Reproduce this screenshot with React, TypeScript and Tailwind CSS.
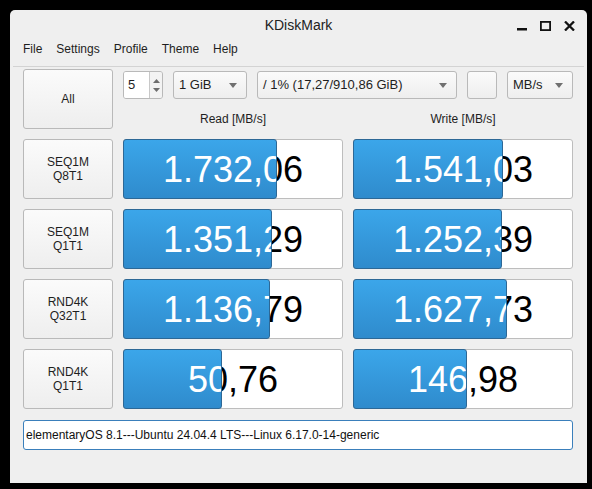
import React from 'react';

const ROWS = [
  { name: ['SEQ1M', 'Q8T1'], read: { text: '1.732,06', fill: 154 }, write: { text: '1.541,03', fill: 150 } },
  { name: ['SEQ1M', 'Q1T1'], read: { text: '1.351,29', fill: 149 }, write: { text: '1.252,39', fill: 149 } },
  { name: ['RND4K', 'Q32T1'], read: { text: '1.136,79', fill: 147 }, write: { text: '1.627,73', fill: 154 } },
  { name: ['RND4K', 'Q1T1'], read: { text: '50,76', fill: 99 }, write: { text: '146,98', fill: 114 } },
];

const MENU = ['File', 'Settings', 'Profile', 'Theme', 'Help'];

function Arrow() {
  return (
    <svg width="8" height="5" viewBox="0 0 8 5" className="shrink-0">
      <path d="M0 0 H8 L4 5 Z" fill="#707070" />
    </svg>
  );
}

function Combo({ label, width }: { label: string; width: string }) {
  return (
    <div
      className={`${width} h-[28px] flex items-center justify-between pl-[5px] pr-[9px] rounded-[3px] border border-[#b9b9b9] bg-gradient-to-b from-[#fbfbfb] to-[#eeeeee] text-[13px] text-[#1e1e1e]`}
    >
      <span className="whitespace-nowrap">{label}</span>
      <Arrow />
    </div>
  );
}

function Bar({ text, fill }: { text: string; fill: number }) {
  return (
    <div className="relative w-[220px] h-[60px]">
      <div className="absolute inset-0 rounded-[3px] border border-[#bdbdbd] bg-white flex items-center justify-center pt-[2px] text-[36px] text-black">
        {text}
      </div>
      <div
        className="absolute left-0 top-0 h-[60px] overflow-hidden rounded-[3px] border border-[#2d6896] bg-gradient-to-b from-[#3ba6ea] to-[#2f8bcd]"
        style={{ width: fill }}
      >
        <div className="absolute left-[-1px] top-[-1px] w-[220px] h-[60px] flex items-center justify-center pt-[2px] text-[36px] text-white">
          {text}
        </div>
      </div>
    </div>
  );
}

function TestButton({ lines }: { lines: string[] }) {
  return (
    <div className="w-[90px] h-[60px] shrink-0 flex flex-col items-center justify-center rounded-[3px] border border-[#b9b9b9] bg-gradient-to-b from-[#fbfbfb] to-[#eeeeee] text-[12px] leading-[14px] text-[#1e1e1e]">
      {lines.map((l) => (
        <span key={l}>{l}</span>
      ))}
    </div>
  );
}

export default function App() {
  return (
    <div className="w-[592px] h-[489px] bg-black pt-[10px] pl-[10px] overflow-hidden">
      <div className="w-[577px] h-[473px] bg-[#efefef] rounded-t-[5px] flex flex-col font-['Liberation_Sans',Arial,sans-serif] text-[#1e1e1e]">
        {/* Title bar */}
        <div className="h-[28px] grid grid-cols-3 items-center">
          <div />
          <div className="text-center text-[14px] text-[#222] pt-[3px]">KDiskMark</div>
          <div className="flex items-center justify-end gap-[13px] pr-[12px] pt-[3px]">
            <svg width="10" height="10" viewBox="0 0 10 10">
              <rect x="0" y="7" width="10" height="2.5" fill="#111" />
            </svg>
            <svg width="11" height="10" viewBox="0 0 11 10">
              <rect x="0.9" y="0.9" width="9.2" height="8.2" fill="none" stroke="#111" strokeWidth="1.8" />
            </svg>
            <svg width="11" height="10" viewBox="0 0 11 10">
              <path d="M1 0.5 L10 9.5 M10 0.5 L1 9.5" stroke="#111" strokeWidth="2.3" />
            </svg>
          </div>
        </div>

        {/* Menu bar */}
        <div className="h-[20px] flex items-center gap-[14px] pl-[13px] pt-[2px] text-[12px] text-[#1e1e1e]">
          {MENU.map((m) => (
            <span key={m}>{m}</span>
          ))}
        </div>

        <div className="mt-[8px] mx-[3px] border-t border-[#d3d3d3]" />

        {/* Content */}
        <div className="pl-[13px] pt-[2px] flex flex-col">
          <div className="flex gap-[10px]">
            <div className="w-[90px] h-[60px] shrink-0 flex items-center justify-center rounded-[3px] border border-[#b9b9b9] bg-gradient-to-b from-[#fbfbfb] to-[#eeeeee] text-[12px]">
              All
            </div>
            <div className="flex flex-col">
              <div className="mt-[2px] flex gap-[10px] h-[28px]">
                <div className="w-[40px] h-[28px] flex rounded-[3px] border border-[#b9b9b9] overflow-hidden">
                  <div className="flex-1 bg-white flex items-center pl-[4px] text-[13px]">5</div>
                  <div className="w-[13px] border-l border-[#c8c8c8] bg-[#f3f3f3] flex flex-col items-center justify-center gap-[5px]">
                    <svg width="7" height="4" viewBox="0 0 7 4">
                      <path d="M0 4 H7 L3.5 0 Z" fill="#6e6e6e" />
                    </svg>
                    <svg width="7" height="4" viewBox="0 0 7 4">
                      <path d="M0 0 H7 L3.5 4 Z" fill="#6e6e6e" />
                    </svg>
                  </div>
                </div>
                <Combo label="1 GiB" width="w-[74px]" />
                <Combo label="/ 1% (17,27/910,86 GiB)" width="w-[200px]" />
                <div className="w-[30px] h-[28px] rounded-[3px] border border-[#b9b9b9] bg-gradient-to-b from-[#fbfbfb] to-[#eeeeee]" />
                <Combo label="MB/s" width="w-[66px]" />
              </div>
              <div className="flex gap-[10px] h-[30px] pt-[11px] text-[12px] text-[#1e1e1e]">
                <div className="w-[220px] text-center">Read [MB/s]</div>
                <div className="w-[220px] text-center">Write [MB/s]</div>
              </div>
            </div>
          </div>

          <div className="mt-[10px] flex flex-col gap-[10px]">
            {ROWS.map((r) => (
              <div key={r.name.join()} className="flex gap-[10px]">
                <TestButton lines={r.name} />
                <Bar text={r.read.text} fill={r.read.fill} />
                <Bar text={r.write.text} fill={r.write.fill} />
              </div>
            ))}
          </div>

          <div className="mt-[11px] w-[550px] h-[30px] rounded-[3px] border border-[#3a7fbb] bg-white flex items-center pl-[2px] text-[12px] text-[#111] whitespace-nowrap">
            elementaryOS 8.1---Ubuntu 24.04.4 LTS---Linux 6.17.0-14-generic
          </div>
        </div>
      </div>
    </div>
  );
}
